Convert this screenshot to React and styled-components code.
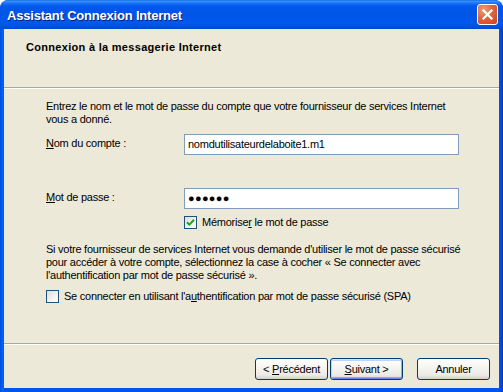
import React from "react";
import styled, { createGlobalStyle } from "styled-components";

const GlobalStyle = createGlobalStyle`
  html, body {
    margin: 0;
    padding: 0;
    background: #ffffff;
  }
  body {
    font-family: "Liberation Sans", Arial, sans-serif;
    font-size: 11px;
    letter-spacing: -0.25px;
    color: #000;
  }
`;

const App = () => {
  return (
    <>
      <GlobalStyle />
      <Window>
        <TitleBar>
          <Caption>Assistant Connexion Internet</Caption>
          <CloseButton aria-label="Fermer">
            <svg width="13" height="13" viewBox="0 0 13 13">
              <path
                d="M2.5 2.5 L10.5 10.5 M10.5 2.5 L2.5 10.5"
                stroke="#fff"
                strokeWidth="2.2"
                strokeLinecap="square"
              />
            </svg>
          </CloseButton>
        </TitleBar>
        <Client>
          <Header>
            <HeaderTitle>Connexion à la messagerie Internet</HeaderTitle>
          </Header>
          <Etched />
          <Content>
            <Para>
              Entrez le nom et le mot de passe du compte que votre fournisseur
              de services Internet
              <br />
              vous a donné.
            </Para>
            <FieldRow $top={8}>
              <Label>
                <u>N</u>om du compte :
              </Label>
              <TextBox>nomdutilisateurdelaboite1.m1</TextBox>
            </FieldRow>
            <FieldRow $top={33}>
              <Label>
                <u>M</u>ot de passe :
              </Label>
              <TextBox $password>●●●●●●</TextBox>
            </FieldRow>
            <CheckRow $top={7} $indent={138}>
              <CheckBox>
                <svg width="9" height="9" viewBox="0 0 9 9">
                  <path
                    d="M1 4.2 L3.4 6.6 L8 1.8"
                    stroke="#21a121"
                    strokeWidth="2"
                    fill="none"
                  />
                </svg>
              </CheckBox>
              <span>
                Mémorise<u>r</u> le mot de passe
              </span>
            </CheckRow>
            <Para $top={14}>
              Si votre fournisseur de services Internet vous demande d'utiliser
              le mot de passe sécurisé
              <br />
              pour accéder à votre compte, sélectionnez la case à cocher « Se
              connecter avec
              <br />
              l'authentification par mot de passe sécurisé ».
            </Para>
            <CheckRow $top={8}>
              <CheckBox />
              <span>
                Se connecter en utilisant l'a<u>u</u>thentification par mot de
                passe sécurisé (SPA)
              </span>
            </CheckRow>
          </Content>
          <Etched />
          <Footer>
            <Button>
              <span>
                &lt; <u>P</u>récédent
              </span>
            </Button>
            <Button $default>
              <span>
                <u>S</u>uivant &gt;
              </span>
            </Button>
            <Button $gap={12}>
              <span>Annuler</span>
            </Button>
          </Footer>
        </Client>
      </Window>
    </>
  );
};

export default App;

const Window = styled.div`
  width: 503px;
  height: 392px;
  box-sizing: border-box;
  display: flex;
  flex-direction: column;
  border-radius: 8px 8px 0 0;
  background: linear-gradient(
    to right,
    #0046d8 0,
    #0058ee 1px,
    #0066ff 3px,
    #0055ea 4px,
    #0055ea calc(100% - 4px),
    #0046d8 calc(100% - 1px),
    #002fb0 100%
  );
  overflow: hidden;
`;

const TitleBar = styled.div`
  height: 29px;
  flex: 0 0 29px;
  display: flex;
  align-items: center;
  padding: 0 6px 0 7px;
  border-radius: 8px 8px 0 0;
  background: linear-gradient(
    to bottom,
    #0a5fd8 0,
    #3d95ff 1px,
    #1a76f5 3px,
    #0058ee 6px,
    #0055e5 45%,
    #0058ee 80%,
    #0050e0 92%,
    #0048d0 100%
  );
`;

const Caption = styled.div`
  flex: 1;
  color: #fff;
  font-family: "Liberation Sans", Arial, sans-serif;
  font-weight: bold;
  font-size: 13px;
  letter-spacing: -0.2px;
  text-shadow: 1px 1px 0 #0a1e78;
  padding-top: 1px;
`;

const CloseButton = styled.div`
  width: 19px;
  height: 19px;
  margin-right: -1px;
  border: 1px solid #fff;
  border-radius: 3px;
  display: flex;
  align-items: center;
  justify-content: center;
  background: radial-gradient(
    circle at 30% 25%,
    #f29a7c 0,
    #e2643f 45%,
    #c8421d 100%
  );
`;

const Client = styled.div`
  flex: 1;
  margin: 0 4px 4px;
  background: #ece9d8;
  display: flex;
  flex-direction: column;
`;

const Header = styled.div`
  height: 58px;
  box-sizing: border-box;
  padding: 12px 0 0 22px;
`;

const HeaderTitle = styled.div`
  font-weight: bold;
  font-size: 11px;
  letter-spacing: 0.3px;
  line-height: 13px;
`;

const Etched = styled.div`
  height: 1px;
  flex: 0 0 1px;
  background: #aca899;
  border-bottom: 1px solid #fff;
`;

const Content = styled.div`
  flex: 1;
  display: flex;
  flex-direction: column;
  padding: 11px 0 0 42px;
`;

const Para = styled.p`
  margin: ${(p) => p.$top || 0}px 0 0;
  line-height: 13px;
`;

const FieldRow = styled.div`
  display: grid;
  grid-template-columns: 138px 275px;
  align-items: center;
  margin-top: ${(p) => p.$top}px;
`;

const Label = styled.span`
  line-height: 13px;
  padding-bottom: 2px;
`;

const TextBox = styled.div`
  height: 21px;
  box-sizing: border-box;
  border: 1px solid #7f9db9;
  background: #fff;
  padding: 0 3px;
  display: flex;
  align-items: center;
  line-height: 13px;
  font-size: 11px;
  letter-spacing: ${(p) => (p.$password ? "0.3px" : "-0.25px")};
`;

const CheckRow = styled.div`
  display: flex;
  align-items: center;
  gap: 5px;
  margin-top: ${(p) => p.$top}px;
  margin-left: ${(p) => p.$indent || 0}px;
  line-height: 13px;
`;

const CheckBox = styled.span`
  width: 13px;
  height: 13px;
  box-sizing: border-box;
  border: 1px solid #1c5180;
  background: linear-gradient(135deg, #dcdcd7 0%, #f4f4f0 60%, #ffffff 100%);
  display: flex;
  align-items: center;
  justify-content: center;
  flex: 0 0 13px;
`;

const Footer = styled.div`
  height: 43px;
  box-sizing: border-box;
  display: flex;
  justify-content: flex-end;
  align-items: flex-start;
  padding: 13px 9px 0 0;
  gap: 2px;
`;

const Button = styled.div`
  width: 73px;
  height: 22px;
  box-sizing: border-box;
  margin-left: ${(p) => p.$gap || 0}px;
  border: 1px solid #003c74;
  border-radius: 3px;
  display: flex;
  align-items: center;
  justify-content: center;
  line-height: 13px;
  background: linear-gradient(
    to bottom,
    #ffffff 0%,
    #f6f5f1 40%,
    #ecebe6 80%,
    #d6d0c5 100%
  );
  box-shadow: ${(p) =>
    p.$default
      ? "inset 0 1px 0 #cee7ff, inset 1px 0 0 #bcd4f6, inset -1px 0 0 #89ade4, inset 0 -1px 0 #6982ee, inset 0 2px 0 #bcd4f6, inset 0 -2px 0 #89ade4"
      : "none"};
`;
